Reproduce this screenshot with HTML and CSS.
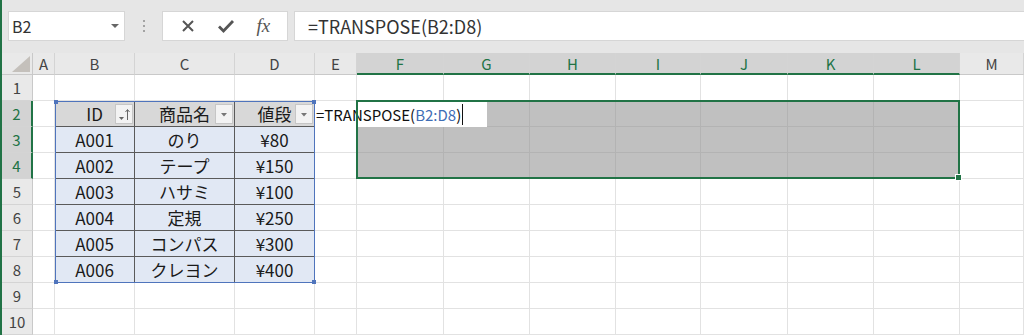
FILE: index.html
```html
<!DOCTYPE html>
<html lang="ja">
<head>
<meta charset="utf-8">
<title>TRANSPOSE</title>
<link rel="stylesheet" href="styles.css">
</head>
<body>
<div class="app">
  <div class="toolbar">
    <div class="namebox"><span>B2</span><i class="caret"></i></div>
    <div class="grip"><i></i><i></i><i></i></div>
    <div class="fbuttons">
      <svg width="16" height="16" viewBox="0 0 16 16"><path d="M3 3 L13 13 M13 3 L3 13" stroke="#555" stroke-width="2" fill="none"/></svg>
      <svg width="18" height="16" viewBox="0 0 18 16"><path d="M2 8.5 L6.5 13 L16 3" stroke="#555" stroke-width="2.8" fill="none"/></svg>
      <span class="fx">fx</span>
    </div>
    <div class="formula">=TRANSPOSE(B2:D8)</div>
  </div>

  <div class="sheet">
    <div class="cells">
      <!-- column headers -->
      <div class="corner"></div>
      <div class="ch">A</div><div class="ch">B</div><div class="ch">C</div><div class="ch">D</div><div class="ch">E</div>
      <div class="ch s">F</div><div class="ch s">G</div><div class="ch s">H</div><div class="ch s">I</div><div class="ch s">J</div><div class="ch s">K</div><div class="ch s">L</div>
      <div class="ch">M</div>

      <!-- row 1 -->
      <div class="rh">1</div>
      <div class="c"></div><div class="c"></div><div class="c"></div><div class="c"></div><div class="c"></div>
      <div class="c"></div><div class="c"></div><div class="c"></div><div class="c"></div><div class="c"></div><div class="c"></div><div class="c"></div>
      <div class="c"></div>

      <!-- row 2 : table header -->
      <div class="rh s">2</div>
      <div class="c"></div>
      <div class="t th">ID<span class="fb"><svg width="16" height="18" viewBox="0 0 16 18"><path d="M3 12 h5 l-2.5 3 z" fill="#666"/><path d="M11.5 15 V5 M9.5 7 L11.5 4.5 L13.5 7" stroke="#666" stroke-width="1" fill="none"/></svg></span></div>
      <div class="t th">商品名<span class="fb"><svg width="16" height="18" viewBox="0 0 16 18"><path d="M5 8 h6 l-3 3.5 z" fill="#777"/></svg></span></div>
      <div class="t th">値段<span class="fb"><svg width="16" height="18" viewBox="0 0 16 18"><path d="M5 8 h6 l-3 3.5 z" fill="#777"/></svg></span></div>
      <div class="c"></div>
      <div class="c s"></div><div class="c s"></div><div class="c s"></div><div class="c s"></div><div class="c s"></div><div class="c s"></div><div class="c s"></div>
      <div class="c"></div>

      <!-- row 3 -->
      <div class="rh s">3</div>
      <div class="c"></div>
      <div class="t">A001</div><div class="t">のり</div><div class="t">¥80</div>
      <div class="c"></div>
      <div class="c s"></div><div class="c s"></div><div class="c s"></div><div class="c s"></div><div class="c s"></div><div class="c s"></div><div class="c s"></div>
      <div class="c"></div>

      <!-- row 4 -->
      <div class="rh s">4</div>
      <div class="c"></div>
      <div class="t">A002</div><div class="t">テープ</div><div class="t">¥150</div>
      <div class="c"></div>
      <div class="c s"></div><div class="c s"></div><div class="c s"></div><div class="c s"></div><div class="c s"></div><div class="c s"></div><div class="c s"></div>
      <div class="c"></div>

      <!-- row 5 -->
      <div class="rh">5</div>
      <div class="c"></div>
      <div class="t">A003</div><div class="t">ハサミ</div><div class="t">¥100</div>
      <div class="c"></div>
      <div class="c"></div><div class="c"></div><div class="c"></div><div class="c"></div><div class="c"></div><div class="c"></div><div class="c"></div>
      <div class="c"></div>

      <!-- row 6 -->
      <div class="rh">6</div>
      <div class="c"></div>
      <div class="t">A004</div><div class="t">定規</div><div class="t">¥250</div>
      <div class="c"></div>
      <div class="c"></div><div class="c"></div><div class="c"></div><div class="c"></div><div class="c"></div><div class="c"></div><div class="c"></div>
      <div class="c"></div>

      <!-- row 7 -->
      <div class="rh">7</div>
      <div class="c"></div>
      <div class="t">A005</div><div class="t">コンパス</div><div class="t">¥300</div>
      <div class="c"></div>
      <div class="c"></div><div class="c"></div><div class="c"></div><div class="c"></div><div class="c"></div><div class="c"></div><div class="c"></div>
      <div class="c"></div>

      <!-- row 8 -->
      <div class="rh">8</div>
      <div class="c"></div>
      <div class="t">A006</div><div class="t">クレヨン</div><div class="t">¥400</div>
      <div class="c"></div>
      <div class="c"></div><div class="c"></div><div class="c"></div><div class="c"></div><div class="c"></div><div class="c"></div><div class="c"></div>
      <div class="c"></div>

      <!-- row 9 -->
      <div class="rh">9</div>
      <div class="c"></div><div class="c"></div><div class="c"></div><div class="c"></div><div class="c"></div>
      <div class="c"></div><div class="c"></div><div class="c"></div><div class="c"></div><div class="c"></div><div class="c"></div><div class="c"></div>
      <div class="c"></div>

      <!-- row 10 -->
      <div class="rh">10</div>
      <div class="c"></div><div class="c"></div><div class="c"></div><div class="c"></div><div class="c"></div>
      <div class="c"></div><div class="c"></div><div class="c"></div><div class="c"></div><div class="c"></div><div class="c"></div><div class="c"></div>
      <div class="c"></div>
    </div>

    <!-- highlights drawn on top of the cells -->
    <div class="overlay">
      <div class="range"><i class="tl"></i><i class="tr"></i><i class="bl"></i><i class="br"></i></div>
      <div class="selection"><i class="handle"></i></div>
      <div class="edit">=TRANSPOSE(<span class="ref">B2:D8</span>)<span class="cursor"></span></div>
    </div>
  </div>
</div>
</body>
</html>
```

FILE: styles.css
```css
* {
  box-sizing: border-box;
}

body {
  margin: 0;
  background: #fff;
  font-family: "Noto Sans CJK JP", "Noto Sans", sans-serif;
  color: #222;
}

.app {
  height: 335px;
  overflow: hidden;
  border-left: 2px solid #217346;
}

/* formula bar */

.toolbar {
  height: 53px;
  background: #e6e6e6;
  display: flex;
  align-items: flex-start;
  padding: 11px 0 0 6px;
}

.namebox {
  width: 117px;
  height: 30px;
  background: #fff;
  border: 1px solid #d6d6d6;
  display: flex;
  align-items: center;
  justify-content: space-between;
  padding: 0 5px 0 3px;
  font-size: 16px;
  color: #333;
}

.caret {
  border-left: 4px solid transparent;
  border-right: 4px solid transparent;
  border-top: 4px solid #666;
}

.grip {
  width: 37px;
  height: 30px;
  display: flex;
  flex-direction: column;
  align-items: center;
  justify-content: center;
  gap: 3px;
}

.grip i {
  width: 2px;
  height: 2px;
  background: #a3a3a3;
}

.fbuttons {
  width: 126px;
  height: 30px;
  background: #fff;
  border: 1px solid #d6d6d6;
  display: flex;
  align-items: center;
  justify-content: space-around;
  padding: 0 6px;
}

.fx {
  font-family: "Liberation Serif", serif;
  font-style: italic;
  font-size: 19px;
  color: #555;
}

.formula {
  flex: 1;
  margin-left: 6px;
  height: 30px;
  background: #fff;
  border: 1px solid #d6d6d6;
  border-right: 0;
  padding-left: 13px;
  display: flex;
  align-items: center;
  font-size: 18px;
  color: #333;
}

/* sheet */

.sheet {
  position: relative;
  --cols: 31px 22px 80px 100px 80px 42px 87px 86px 86px 85px 87px 86px 86px 1fr;
  --rows: 22px repeat(10, 26px);
}

.cells,
.overlay {
  display: grid;
  grid-template-columns: var(--cols);
  grid-template-rows: var(--rows);
}

.overlay {
  position: absolute;
  inset: 0;
  pointer-events: none;
}

.cells > div {
  display: flex;
  align-items: center;
  justify-content: center;
  font-size: 15px;
}

.corner {
  background: #e9e9e9;
  border-right: 1px solid #c9c9c9;
  border-bottom: 1px solid #c9c9c9;
  position: relative;
}

.corner::after {
  content: "";
  position: absolute;
  right: 2px;
  bottom: 2px;
  width: 18px;
  height: 16px;
  background: #c4c0bb;
  clip-path: polygon(100% 0, 100% 100%, 0 100%);
}

.ch {
  background: #e9e9e9;
  border-right: 1px solid #d4d4d4;
  border-bottom: 1px solid #c9c9c9;
  color: #444;
}

.ch.s {
  background: #d3d3d3;
  color: #217346;
  border-bottom: 2px solid #217346;
}

.rh {
  background: #e9e9e9;
  border-right: 1px solid #c9c9c9;
  border-bottom: 1px solid #d4d4d4;
  color: #444;
}

.rh.s {
  background: #d3d3d3;
  color: #217346;
  border-right: 2px solid #217346;
}

.c {
  border-right: 1px solid #e2e2e2;
  border-bottom: 1px solid #e2e2e2;
}

.c.s {
  background: #c0c0c0;
  border-color: #b3b3b3;
}

.cells > .t {
  background: #e1e8f4;
  border-right: 1px solid #5a5a5a;
  border-bottom: 1px solid #5a5a5a;
  color: #1a1a1a;
  font-size: 17px;
}

.cells > .th {
  background: #d8d8d8;
  position: relative;
}

.fb {
  position: absolute;
  right: 1px;
  top: 3px;
  width: 18px;
  height: 20px;
  background: #f3f3f3;
  border: 1px solid #c6c6c6;
  display: flex;
  align-items: center;
  justify-content: center;
}

/* table reference outline */

.range {
  grid-column: 3 / 6;
  grid-row: 3 / 10;
  border: 1px solid #4f74bc;
  position: relative;
}

.range i {
  position: absolute;
  width: 4px;
  height: 4px;
  background: #4f74bc;
}

.range .tl { left: -2px; top: -2px; }
.range .tr { right: -2px; top: -2px; }
.range .bl { left: -2px; bottom: -2px; }
.range .br { right: -2px; bottom: -2px; }

/* selected target range */

.selection {
  grid-column: 7 / 14;
  grid-row: 3 / 6;
  border: 2px solid #217346;
  margin: -1px 0 0 -1px;
  position: relative;
}

.handle {
  position: absolute;
  right: -4px;
  bottom: -4px;
  width: 7px;
  height: 7px;
  background: #217346;
  border: 1px solid #fff;
}

/* in-cell editor */

.edit {
  grid-column: 6 / 9;
  grid-row: 3;
  width: 172px;
  margin-top: 1px;
  background: #fff;
  display: flex;
  align-items: center;
  padding-left: 1px;
  font-size: 15px;
  color: #111;
}

.ref {
  color: #3f6db5;
}

.cursor {
  width: 1px;
  height: 21px;
  margin-left: 1px;
  background: #111;
}
```
